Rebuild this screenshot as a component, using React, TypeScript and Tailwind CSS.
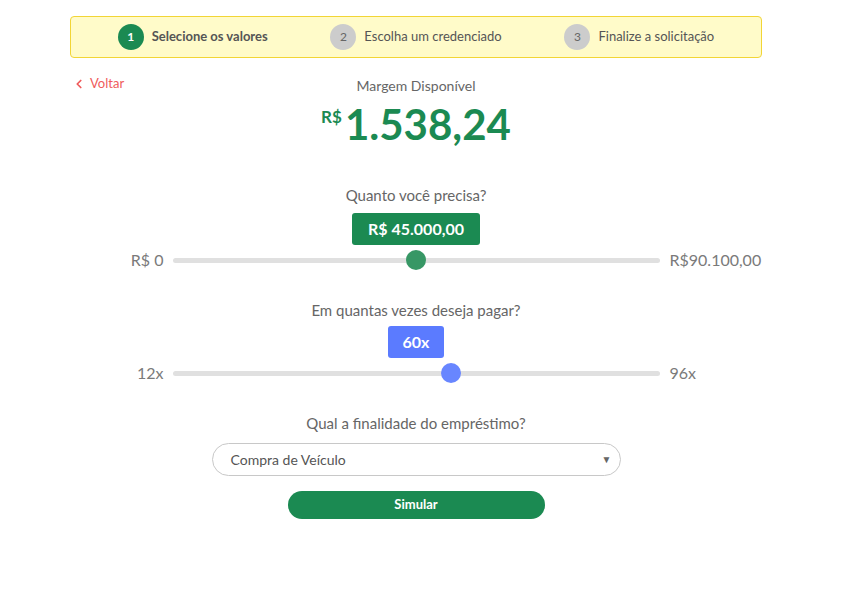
import { ChevronLeft } from "lucide-react";

const steps = [
  { n: 1, label: "Selecione os valores", active: true },
  { n: 2, label: "Escolha um credenciado", active: false },
  { n: 3, label: "Finalize a solicitação", active: false },
];

type SliderProps = {
  min: string;
  max: string;
  pct: number;
  thumb: string;
};

function RangeRow({ min, max, pct, thumb }: SliderProps) {
  return (
    <div className="grid h-[24px] grid-cols-[1fr_487px_1fr] items-center">
      <span className="pr-[9px] text-right text-[16px] leading-[24px] text-[#7a7a7a]">{min}</span>
      <div className="relative h-[20px]">
        <div className="absolute left-0 right-0 top-[8px] h-[5px] rounded-full bg-[#e0e0e0]" />
        <div
          className={`absolute top-0 h-[20px] w-[20px] -translate-x-1/2 rounded-full ${thumb}`}
          style={{ left: `${pct * 100}%` }}
        />
      </div>
      <span className="pl-[10px] text-left text-[16px] leading-[24px] text-[#7a7a7a]">{max}</span>
    </div>
  );
}

export default function App() {
  const amount = 45000;
  const maxAmount = 90100;
  const months = 60;

  return (
    <div className="min-h-[598px] bg-white font-['Lato',sans-serif] text-[#666]">
      <div className="ml-[70px] w-[692px] pt-[16px]">
        {/* steps */}
        <div className="grid h-[42px] grid-cols-3 items-center rounded-[4px] border border-[#f2d536] bg-[#fffbc9] px-[10px]">
          {steps.map((s) => (
            <div key={s.n} className="flex items-center justify-center gap-[8px]">
              <span
                className={`flex h-[26px] w-[26px] items-center justify-center rounded-full text-[12px] ${
                  s.active ? "bg-[#1b8a52] font-bold text-white" : "bg-[#cccccc] text-[#666]"
                }`}
              >
                {s.n}
              </span>
              <span className={`text-[13px] text-[#555] ${s.active ? "font-bold" : ""}`}>{s.label}</span>
            </div>
          ))}
        </div>

        {/* back + available margin */}
        <div className="relative mt-[16px]">
          <button type="button" className="absolute left-[2px] top-[0px] flex items-center gap-[4px] text-[13px] text-[#ef5b5b]">
            <ChevronLeft size={14} strokeWidth={3} />
            <span>Voltar</span>
          </button>
          <div className="pt-[2px] text-center text-[14px] leading-[20px] text-[#666]">Margem Disponível</div>
          <div className="mt-[3px] flex items-start justify-center text-[#1b8a52]">
            <span className="mt-[9px] mr-[3px] text-[17px] font-bold leading-none">R$</span>
            <span className="text-[42px] font-bold leading-[50px]">1.538,24</span>
          </div>
        </div>

        {/* amount */}
        <div className="mt-[36px] text-center text-[15px] leading-[20px]">Quanto você precisa?</div>
        <div className="mt-[8px] flex justify-center">
          <span className="flex h-[32px] items-center rounded-[3px] bg-[#1b8a52] px-[16px] text-[16px] font-bold text-white">
            R$ 45.000,00
          </span>
        </div>
        <div className="mt-[3px]">
          <RangeRow min="R$ 0" max="R$90.100,00" pct={amount / maxAmount} thumb="bg-[#379765]" />
        </div>

        {/* months */}
        <div className="mt-[28px] text-center text-[15px] leading-[20px]">Em quantas vezes deseja pagar?</div>
        <div className="mt-[6px] flex justify-center">
          <span className="flex h-[32px] items-center rounded-[3px] bg-[#5b7bff] px-[15px] text-[16px] font-bold text-white">
            60x
          </span>
        </div>
        <div className="mt-[3px]">
          <RangeRow min="12x" max="96x" pct={(months - 12) / (96 - 12)} thumb="bg-[#6886ff]" />
        </div>

        {/* purpose */}
        <div className="mt-[28px] text-center text-[15px] leading-[20px]">Qual a finalidade do empréstimo?</div>
        <div className="mt-[10px] flex justify-center">
          <div className="relative flex h-[33px] w-[409px] items-center rounded-full border border-[#c8c8c8] pl-[18px] text-[14px] text-[#555]">
            Compra de Veículo
            <span className="absolute right-[8px] top-[8px] text-[10px] text-[#666]">▼</span>
          </div>
        </div>
        <div className="mt-[15px] flex justify-center">
          <button
            type="button"
            className="h-[28px] w-[257px] rounded-full bg-[#1b8a52] text-[13px] font-bold text-white"
          >
            Simular
          </button>
        </div>
      </div>
    </div>
  );
}
